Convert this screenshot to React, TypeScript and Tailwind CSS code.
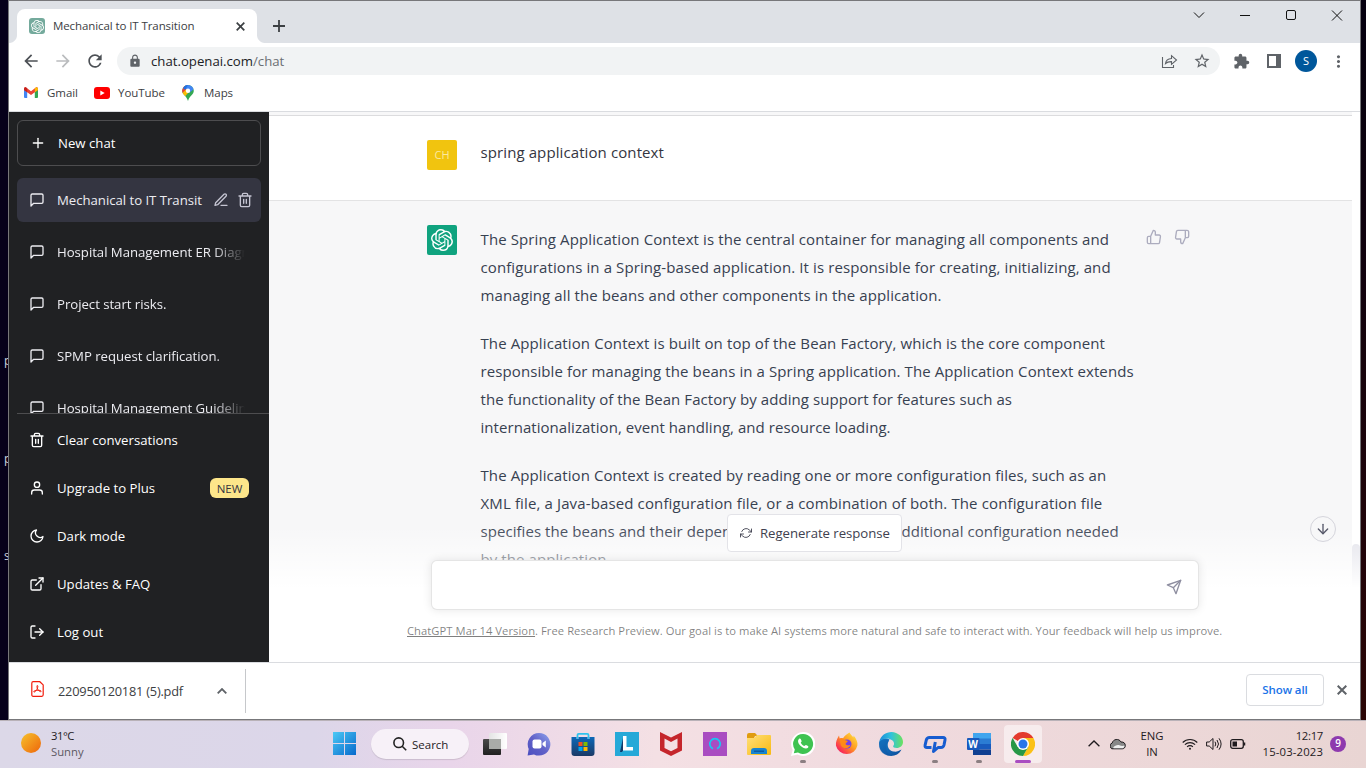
import React from "react";
import {
  FiMessageSquare, FiPlus, FiEdit3, FiTrash2, FiUser, FiMoon, FiExternalLink, FiLogOut,
  FiThumbsUp, FiThumbsDown, FiRefreshCcw, FiSend, FiArrowDown,
} from "react-icons/fi";
import { MdLock, MdStarBorder, MdExtension, MdArrowBack, MdArrowForward, MdRefresh, MdMoreVert, MdClose } from "react-icons/md";
import { SiOpenai } from "react-icons/si";

const answer: { text: string; cls: string }[][] = [
  [
    { text: "The Spring Application Context is the central container for managing all components and", cls: "tracking-[0.114px]" },
    { text: "configurations in a Spring-based application. It is responsible for creating, initializing, and", cls: "tracking-[0.1px]" },
    { text: "managing all the beans and other components in the application.", cls: "tracking-[0.1px]" },
  ],
  [
    { text: "The Application Context is built on top of the Bean Factory, which is the core component", cls: "tracking-[0.105px]" },
    { text: "responsible for managing the beans in a Spring application. The Application Context extends", cls: "tracking-[0.1px]" },
    { text: "the functionality of the Bean Factory by adding support for features such as", cls: "tracking-[0.065px]" },
    { text: "internationalization, event handling, and resource loading.", cls: "tracking-[0.05px]" },
  ],
  [
    { text: "The Application Context is created by reading one or more configuration files, such as an", cls: "tracking-[0.09px]" },
    { text: "XML file, a Java-based configuration file, or a combination of both. The configuration file", cls: "tracking-[0.13px]" },
    { text: "specifies the beans and their dependencies, as well as any additional configuration needed", cls: "tracking-[0.057px]" },
    { text: "by the application.", cls: "tracking-[0.08px]" },
  ],
];

const chats = ["Hospital Management ER Diagram", "Project start risks.", "SPMP request clarification.", "Hospital Management Guidelines"];

function DesktopEdge() {
  return (
    <div className="flex w-2 shrink-0 flex-col overflow-hidden bg-[#06001a] pl-1 text-[12px] leading-4 text-gray-300">
      <span className="mt-[353px]">p</span>
      <span className="mt-[82px]">p</span>
      <span className="mt-[81px]">s</span>
    </div>
  );
}

function TabStrip() {
  return (
    <div className="flex h-[42px] shrink-0 items-end bg-[#dee1e6]">
      <span className="size-2 bg-[radial-gradient(circle_at_0_0,#dee1e6_7.5px,#fff_8.5px)]" />
      <div className="flex h-[34px] w-60 items-center rounded-t-lg bg-white pl-3 pr-2.5">
        <span className="flex size-4 items-center justify-center rounded-[3px] bg-[#74aa9c] text-white">
          <SiOpenai size={13} />
        </span>
        <span className="ml-2 flex-1 whitespace-nowrap text-[11.5px] tracking-[-0.09px] text-[#3c4043]">Mechanical to IT Transition</span>
        <svg width="9" height="9" viewBox="0 0 9 9" stroke="#3c4043" strokeWidth="1.700" className="mr-0.5">
          <path d="M.7.700l7.600 7.600M8.300.700L.7 8.300" />
        </svg>
      </div>
      <span className="size-2 bg-[radial-gradient(circle_at_100%_0,#dee1e6_7.5px,#fff_8.5px)]" />
      <svg className="mb-[11px] ml-2" width="12" height="12" viewBox="0 0 12 12" stroke="#3c4043" strokeWidth="1.8">
        <path d="M6 0v12M0 6h12" />
      </svg>
      <div className="flex-1" />
      <div className="flex h-[42px] items-start pr-[17px] pt-[7px]">
        <svg width="150" height="13" viewBox="0 0 150 13" fill="none" stroke="#111" strokeWidth="1">
          <path d="M1 4.500l5 5 5-5M47 7.500h10" />
          <rect x="93.500" y="2.500" width="9" height="9" rx="1.500" />
          <path d="M139 2.500l10 10M149 2.500l-10 10" />
        </svg>
      </div>
    </div>
  );
}

function Toolbar() {
  return (
    <div className="flex h-9 shrink-0 items-center text-[#5f6368]">
      <MdArrowBack size={20} className="ml-3 text-[#4d5156]" />
      <MdArrowForward size={20} className="ml-3 text-[#babcbe]" />
      <MdRefresh size={20} className="ml-3 text-[#4d5156]" />
      <div className="ml-3 flex h-7 w-[1103px] items-center rounded-full bg-[#f1f3f4] pl-[11px] pr-[9px]">
        <MdLock size={14} />
        <span className="ml-[9px] mt-px flex-1 whitespace-nowrap text-[13.2px] text-[#202124]">
          chat.openai.com<span className="text-[#6b6f73]">/chat</span>
        </span>
        <svg width="17" height="16" viewBox="0 0 17 16" fill="none" stroke="#5f6368" strokeWidth="1.1">
          <path d="M1.500 4v10.500h11v-2.500M4.500 10.500c.4-3.200 2.400-4.800 6-5V2.700L15.500 7l-5 4.300V8.600C7.700 8.500 5.900 9.200 4.500 10.500z" />
        </svg>
        <MdStarBorder size={18} className="ml-[15px]" />
      </div>
      <MdExtension size={17} className="ml-[13px]" />
      <svg className="ml-[17px]" width="14" height="14" viewBox="0 0 14 14">
        <path fill="#5f6368" fillRule="evenodd" d="M0 0h14v14H0zM2 2v10h7V2z" />
      </svg>
      <span className="ml-[14px] flex size-[22px] items-center justify-center rounded-full bg-[#00579b] text-[11px] text-white">S</span>
      <MdMoreVert size={19} className="ml-3" />
    </div>
  );
}

function Bookmarks() {
  return (
    <div className="flex h-[33px] shrink-0 items-center border-b border-[#dadce0] pb-[5px] pl-[15px] text-[11.5px] tracking-[-0.05px] text-[#3c4043]">
      <svg width="14" height="11" viewBox="0 0 14 11">
        <path fill="#4285f4" d="M0 2v8q0 1 1 1h2.200V4.500z" />
        <path fill="#34a853" d="M14 2v8q0 1-1 1h-2.200V4.500z" />
        <path fill="#ea4335" d="M0 2Q0 0 1.500 0L7 4.300 12.500 0Q14 0 14 2v1L7 8 0 3z" />
        <path fill="#fbbc04" d="M10.800 1.300L12.200.2Q14 0 14 2v1l-3.200 2.300z" />
        <path fill="#c5221f" d="M0 2Q0 0 1.700.2L3.200 1.300v4L0 3z" />
      </svg>
      <span className="ml-[9px] w-[38px]">Gmail</span>
      <svg width="16" height="12" viewBox="0 0 16 12" className="ml-[9px]">
        <rect width="16" height="12" rx="3" fill="#f00" />
        <path d="M6.300 3.400v5.200L10.700 6z" fill="#fff" />
      </svg>
      <span className="ml-2 w-[55px]">YouTube</span>
      <svg width="12" height="16" viewBox="0 0 12 16" className="ml-[9px]">
        <clipPath id="pin"><path d="M6 0a5.800 5.800 0 0 1 5.800 5.800C11.800 9.500 7.800 10.500 6 16 4.200 10.500.2 9.500.2 5.800A5.800 5.800 0 0 1 6 0z" /></clipPath>
        <g clipPath="url(#pin)">
          <path fill="#34a853" d="M0 0h12v16H0z" />
          <path fill="#ea4335" d="M0 0h4l2 4-5 5-1-1z" />
          <path fill="#4285f4" d="M3 0h9v4L7 8 3.500 3z" />
          <path fill="#1a73e8" d="M3 0h3L3 5 1 3z" />
          <path fill="#fbbc04" d="M0 8.500L4.500 4l2 3.500L2.500 12z" />
        </g>
        <circle cx="6" cy="5.800" r="2.200" fill="#fff" />
      </svg>
      <span className="ml-[10px]">Maps</span>
    </div>
  );
}

function SideItem({ icon, label, children }: { icon: React.ReactNode; label: string; children?: React.ReactNode }) {
  return (
    <div className="flex h-12 items-center pl-5 pr-5 text-[13.2px] text-white">
      {icon}
      <span className="ml-3 flex-1 pt-0.5">{label}</span>
      {children}
    </div>
  );
}

function TrashIcon({ className }: { className?: string }) {
  return (
    <svg width="16" height="16" viewBox="0 0 24 24" fill="none" stroke="currentColor" strokeWidth="2" strokeLinecap="round" strokeLinejoin="round" className={className}>
      <path d="M3 6h18M19 6v14a2 2 0 0 1-2 2H7a2 2 0 0 1-2-2V6m3 0V4a2 2 0 0 1 2-2h4a2 2 0 0 1 2 2v2M10 11v6M14 11v6" />
    </svg>
  );
}

function Sidebar() {
  return (
    <aside className="flex w-[260px] shrink-0 flex-col bg-[#202123] text-[13.2px] text-[#ececf1]">
      <div className="mx-2 mt-2 flex h-[46px] shrink-0 items-center rounded-md border border-[#4d4d4f] pl-3 text-white">
        <FiPlus size={16} />
        <span className="ml-3 pt-0.5">New chat</span>
      </div>
      <div className="mt-3 flex h-[235px] flex-col gap-2 overflow-hidden px-2">
        <div className="flex h-11 shrink-0 items-center rounded-md bg-[#343541] pl-3 pr-2">
          <FiMessageSquare size={16} />
          <span className="ml-3 flex-1 whitespace-nowrap pt-0.5 tracking-[-0.03px]">Mechanical to IT Transit</span>
          <FiEdit3 size={16} className="text-[#c5c5d2]" />
          <TrashIcon className="ml-2 text-[#c5c5d2]" />
        </div>
        {chats.map((c) => (
          <div key={c} className="flex h-11 shrink-0 items-center pl-3 pr-4">
            <FiMessageSquare size={16} className="shrink-0" />
            <span className="ml-3 flex-1 overflow-hidden whitespace-nowrap mask-r-from-[156px] pt-0.5 tracking-[-0.03px]">{c}</span>
          </div>
        ))}
      </div>
      <div className="ml-2 border-t border-[#4d4d4f]" />
      <div className="-mt-px flex flex-col pt-[3px]">
        <SideItem icon={<TrashIcon />} label="Clear conversations" />
        <SideItem icon={<FiUser size={16} />} label="Upgrade to Plus">
          <span className="flex h-5 w-[39px] items-center justify-center rounded-md bg-[#fde68a] pt-0.5 text-[11.5px] font-medium text-[#343541]">NEW</span>
        </SideItem>
        <SideItem icon={<FiMoon size={16} />} label="Dark mode" />
        <SideItem icon={<FiExternalLink size={16} />} label="Updates & FAQ" />
        <SideItem icon={<FiLogOut size={16} />} label="Log out" />
      </div>
    </aside>
  );
}

function Conversation() {
  return (
    <main className="relative flex h-[550px] flex-1 overflow-hidden bg-white">
      <div className="flex flex-1 flex-col">
        <div className="h-1 shrink-0 border-b border-[#dcdcde] bg-[#f7f7f8]" />
        <div className="flex h-[85px] shrink-0 border-b border-[#e3e3e4] bg-white pl-[158px] pt-6">
          <span className="flex size-[30px] items-center justify-center rounded-xs bg-[#f1c40f] text-[11px] font-medium text-[#fbe9a0]">CH</span>
          <span className="-mt-[2px] ml-[23.500px] whitespace-nowrap text-[15px] leading-7 tracking-[0.1px] text-[#343541]">spring application context</span>
        </div>
        <div className="flex flex-1 bg-[#f7f7f8] pl-[158px] pt-6">
          <span className="flex size-[30px] shrink-0 items-center justify-center rounded-xs bg-[#10a37f] text-white">
            <SiOpenai size={22} />
          </span>
          <div className="ml-[23.500px] flex w-[665px] shrink-0 flex-col gap-5 text-[15px] leading-7 text-[#374151]">
            {answer.map((p, i) => (
              <p key={i}>
                {p.map((l) => (
                  <span key={l.text} className={"block w-fit whitespace-nowrap " + l.cls}>{l.text}</span>
                ))}
              </p>
            ))}
          </div>
          <div className="mt-1 flex h-4 gap-3 text-[#acacbe]">
            <FiThumbsUp size={16} />
            <FiThumbsDown size={16} />
          </div>
        </div>
      </div>
      <div className="flex w-2 shrink-0 flex-col justify-end bg-white">
        <div className="h-[118px] rounded-t-md bg-[#d9d9e3]/80" />
      </div>

      <div className="absolute inset-x-0 bottom-0 flex h-[148px] flex-col bg-linear-to-b from-white/0 from-8% via-white via-50% to-white pl-[162px]">
        <div className="mt-[46px] flex h-[50px] w-[768px] items-center justify-end rounded-md border border-black/10 bg-white pr-4 shadow-[0_0_10px_rgba(0,0,0,0.10)]">
          <FiSend size={16} strokeWidth={2} className="mt-1 text-[#8e8ea0]" />
        </div>
        <p className="-ml-[24px] mt-[13px] whitespace-nowrap text-[11.2px] leading-4 tracking-[0.058px] text-black/50">
          <span className="underline">ChatGPT Mar 14 Version</span>. Free Research Preview. Our goal is to make AI systems more natural and safe to interact with. Your feedback will help us improve.
        </p>
      </div>
      <div className="absolute left-[458px] top-[402px] flex h-[38px] w-[175px] items-center rounded border border-[#e3e3e8] bg-white pl-3 text-[13.2px] text-[#40414f]">
        <FiRefreshCcw size={12} strokeWidth={1.8} className="-scale-x-100" />
        <span className="ml-2 whitespace-nowrap pt-0.5 tracking-[-0.05px]">Regenerate response</span>
      </div>
      <div className="absolute left-[1041px] top-[404px] flex size-[26px] items-center justify-center rounded-full border border-[#d5d5dc] bg-[#f7f7f8] text-[#565869]">
        <FiArrowDown size={16} />
      </div>
    </main>
  );
}

function DownloadBar() {
  return (
    <div className="flex h-[57px] shrink-0 items-center border-t border-[#dadce0] bg-white">
      <svg width="13" height="16" viewBox="0 0 13 16" fill="none" stroke="#f21d0d" strokeWidth="1.200" className="mb-1 ml-[22px]">
        <path d="M.8 2.200Q.8.700 2.200.7h6.600l3.400 3.200v9.900q0 1.500-1.400 1.500H2.200Q.8 15.300.8 13.800z" />
        <path d="M6.300 4.500c1.300 0 0 3.600-1.100 5-.9 1.300-2.300 2-2.500 1.300-.2-.8 2-1.500 4.200-1.500 2 0 3.600.3 3.300 1.100-.5.900-2.600-.5-3.400-2-.8-1.300-1.200-3.900-.5-3.900z" strokeWidth="1" />
      </svg>
      <span className="ml-3.5 w-[125px] whitespace-nowrap pt-0.5 text-[12.800px] tracking-[-0.22px] text-[#3c4043]">220950120181 (5).pdf</span>
      <svg width="10" height="6" viewBox="0 0 10 6" fill="none" stroke="#5f6368" strokeWidth="1.800" className="ml-[34px]">
        <path d="M.7 5.300L5 1l4.300 4.300" />
      </svg>
      <div className="ml-[18px] h-11 w-px bg-[#c6c8cb]" />
      <div className="flex-1" />
      <span className="mb-0.5 flex h-8 w-[78px] items-center justify-center rounded border border-[#dadce0] text-[11.500px] font-semibold tracking-[-0.1px] text-[#1a73e8]">Show all</span>
      <svg width="10" height="10" viewBox="0 0 10 10" stroke="#5f6368" strokeWidth="2" className="mb-0.5 ml-[13px] mr-[13px]">
        <path d="M.7.700l8.600 8.600M9.300.700L.7 9.300" />
      </svg>
    </div>
  );
}

function AppCell({ children, mark }: { children: React.ReactNode; mark?: boolean }) {
  return (
    <div className="flex h-full w-11 flex-col items-center pt-[11px]">
      {children}
      {mark && <span className="mt-1 h-[3px] w-1.5 rounded-full bg-[#8b7f82]" />}
    </div>
  );
}

function Taskbar() {
  return (
    <footer className="flex h-12 shrink-0 items-center border-t border-[#b9b2b8] bg-[linear-gradient(90deg,#dcd8e8_0%,#dcd6e9_23%,#e9d5ea_33%,#f4e0e4_48%,#f0dade_66%,#e9d5d3_100%)] pb-0.5 text-[#1f1b1e]">
      <svg width="20" height="20" viewBox="0 0 20 20" className="mb-0.5 ml-[21px]">
        <defs><linearGradient id="sun" x1="0" y1="0" x2="1" y2="1"><stop offset="0" stopColor="#f6c22d" /><stop offset="1" stopColor="#ee650a" /></linearGradient></defs>
        <circle cx="10" cy="10" r="10" fill="url(#sun)" />
      </svg>
      <div className="ml-2.5 flex w-[271px] flex-col text-[11.3px] leading-4">
        <span className="tracking-[-0.5px]">31°C</span>
        <span className="text-[#5d5862]">Sunny</span>
      </div>
      <div className="flex h-full w-11 items-center justify-center">
        <svg width="23" height="23" viewBox="0 0 23 23">
          <defs><linearGradient id="win" x1="0" y1="0" x2="1" y2="1"><stop offset="0" stopColor="#4cc9f5" /><stop offset="1" stopColor="#0669cc" /></linearGradient></defs>
          <path fill="url(#win)" d="M0 0h11v11H0zM12 0h11v11H12zM0 12h11v11H0zM12 12h11v11H12z" />
        </svg>
      </div>
      <div className="ml-[5px] mr-1 flex h-[30px] w-[98px] items-center rounded-full bg-[#f7f1f8] pl-[22px] shadow-[0_1px_1px_rgba(0,0,0,0.12)]">
        <svg width="14" height="14" viewBox="0 0 14 14" fill="none" stroke="#222" strokeWidth="1.600"><circle cx="5.700" cy="5.700" r="4.800" /><path d="M9.200 9.200l4 4" /></svg>
        <span className="ml-[5px] pt-0.5 text-[11.5px]">Search</span>
      </div>
      <AppCell>
        <svg width="24" height="24" viewBox="0 0 24 24">
          <defs>
            <linearGradient id="tv1" x1="0" y1="0" x2="0" y2="1"><stop offset="0" stopColor="#4a4a4a" /><stop offset="1" stopColor="#202020" /></linearGradient>
            <linearGradient id="tv2" x1="0" y1="0" x2="1" y2="0"><stop offset="0" stopColor="#e4e4e4" /><stop offset="1" stopColor="#fff" /></linearGradient>
          </defs>
          <rect x="6" y="1" width="18" height="16" rx="1" fill="url(#tv2)" />
          <rect x="0" y="7" width="18" height="16" rx="1" fill="url(#tv1)" />
          <rect x="6" y="7" width="12" height="10" fill="#a9aba8" />
        </svg>
      </AppCell>
      <AppCell>
        <svg width="24" height="24" viewBox="0 0 24 24">
          <defs><linearGradient id="teams" x1="0" y1="1" x2="1" y2="0"><stop offset="0" stopColor="#4b4fc0" /><stop offset=".5" stopColor="#6262c8" /><stop offset="1" stopColor="#8fa5ef" /></linearGradient></defs>
          <path fill="url(#teams)" d="M12 1a11.300 11.300 0 1 1-5 21.400L.6 23.500 1.700 17A11.300 11.300 0 0 1 12 1z" />
          <rect x="5.500" y="7.500" width="9" height="9" rx="2" fill="#fff" />
          <path d="M15.500 11l3.300-2.500v7L15.500 13z" fill="#fff" />
        </svg>
      </AppCell>
      <AppCell>
        <svg width="24" height="24" viewBox="0 0 24 24">
          <defs><linearGradient id="store" x1="0" y1="0" x2="0" y2="1"><stop offset="0" stopColor="#0c68b8" /><stop offset="1" stopColor="#1c3a66" /></linearGradient></defs>
          <path d="M6.500 7V3q0-1.200 1.200-1.200h8.600q1.200 0 1.200 1.200v4" fill="none" stroke="#2fc3ee" strokeWidth="1.800" />
          <path fill="url(#store)" d="M.5 5h5v2h2V5h9v2h2V5h5v16q0 3-3 3h-17q-3 0-3-3z" />
          <path fill="#f25022" d="M7.500 10h4v4h-4z" /><path fill="#7fba00" d="M12.500 10h4v4h-4z" />
          <path fill="#00a4ef" d="M7.500 15h4v4h-4z" /><path fill="#ffb900" d="M12.500 15h4v4h-4z" />
        </svg>
      </AppCell>
      <AppCell>
        <svg width="24" height="24" viewBox="0 0 24 24">
          <path fill="#25a9d8" d="M0 0h24v24H0z" />
          <path fill="#123c6b" d="M8 6v12.500l-1 1.500H5z" />
          <path fill="#fff" d="M8 4h3.500v11H18v3.500H8z" />
        </svg>
      </AppCell>
      <AppCell>
        <svg width="24" height="24" viewBox="0 0 24 24">
          <path fill="#c5262c" fillRule="evenodd" d="M1 0l11 5.500L23 0v18.500L12 24 1 18.500zM5.500 6.500V16L12 19.200 18.500 16V6.500L12 10z" />
        </svg>
      </AppCell>
      <AppCell>
        <svg width="24" height="24" viewBox="0 0 24 24">
          <path fill="#a94dc1" d="M0 0h24v24H0z" />
          <path d="M10 16.700a5.200 5.200 0 1 1 4 0" fill="none" stroke="#1bc6f2" strokeWidth="1.700" />
        </svg>
      </AppCell>
      <AppCell>
        <svg width="24" height="24" viewBox="0 0 24 24">
          <defs><linearGradient id="folder" x1="0" y1="0" x2="1" y2="1"><stop offset="0" stopColor="#ffe07a" /><stop offset="1" stopColor="#f8b911" /></linearGradient></defs>
          <path fill="#e09c10" d="M0 3q0-2 2-2h6l3 3h-3L6 8H0z" />
          <path fill="url(#folder)" d="M0 6h7l3-3h13q1 0 1 1v18q0 1-1 1H1q-1 0-1-1z" />
          <path fill="#1884d0" d="M4 19q0-3 3-3h10q3 0 3 3v3H4z" />
          <path fill="#0d5ca3" d="M7 18.500h10V20H7z" />
        </svg>
      </AppCell>
      <AppCell mark>
        <svg width="24" height="24" viewBox="0 0 24 24">
          <path fill="#fff" d="M12 0a12 12 0 1 1-5.500 22.500L0 24l1.700-6A12 12 0 0 1 12 0z" />
          <path fill="#3fc351" d="M12 2a10 10 0 1 1-5 18.600L2.800 21.300l1-3.800A10 10 0 0 1 12 2z" />
          <path fill="#fff" d="M8.200 6.800c.5-.5 1.200-.4 1.500.2l.9 2c.2.600-.7 1.200-.8 1.700.7 1.500 1.900 2.600 3.500 3.200.5-.1 1.100-1.200 1.700-1l2 1c.6.400.4 1.300 0 1.800-2.800 3-10.800-3-9.900-7.200.2-.8.6-1.300 1.100-1.700z" />
        </svg>
      </AppCell>
      <AppCell>
        <svg width="24" height="24" viewBox="0 0 24 24">
          <defs><linearGradient id="fox" x1="1" y1="0" x2="0" y2="1"><stop offset="0" stopColor="#fff04a" /><stop offset=".45" stopColor="#ff9a20" /><stop offset=".8" stopColor="#fa3154" /><stop offset="1" stopColor="#d6257e" /></linearGradient></defs>
          <path fill="url(#fox)" d="M14.500.5c.7 2 2.500 3 4 5V3.500c3 3.500 4.500 7 3.900 10A11 11 0 0 1 1 13.800C.5 10 2 7 4 3.500l.7 3c1-.5 2.300-.5 3.300-.3C9.500 3.500 12 2 14.500.5z" />
          <circle cx="12" cy="12" r="4.500" fill="#7542e5" />
          <path fill="#ff8a17" d="M4.600 7.500c3-1.600 4.600-.3 5.800.8l2.500.7c-.4 1.300-2.200 1.700-2.400 3 1 1.600 3 1.600 5 .7-1 4-7.300 4.600-9.400.8-.8-1.600-.8-3.800-1.500-6z" />
        </svg>
      </AppCell>
      <AppCell>
        <svg width="24" height="24" viewBox="0 0 24 24">
          <defs>
            <linearGradient id="edge1" x1="0" y1="0" x2="1" y2="0"><stop offset="0" stopColor="#1b8bd8" /><stop offset=".5" stopColor="#31c2dd" /><stop offset="1" stopColor="#6be25c" /></linearGradient>
            <linearGradient id="edge2" x1="0" y1="0" x2="1" y2="1"><stop offset="0" stopColor="#1787d4" /><stop offset="1" stopColor="#0b4a98" /></linearGradient>
          </defs>
          <path fill="url(#edge2)" d="M.2 10C2 6 7 5.500 10.500 7.500 7 13 9 18.500 14.500 19.500c3 .5 5.500-.5 8-2C19 24.500 11 25.500 5.500 22 1.500 19.500-.5 15 .2 10z" />
          <path fill="url(#edge1)" d="M.2 10C1.500 3.500 7 0 12.500 0 19 .2 24 4.800 24 10c0 3.800-3 6-6.300 6-2.500 0-4-1-3.500-2 1.500-1.500 1-4-.7-5.500C9.500 5.300 3 6 .2 10z" />
          <path fill="#0d4f9e" d="M10 9C6 13 6 20 12 23.900 3 24-1.500 17 .2 10 3 6.500 8 6.500 10 9z" opacity=".35" />
        </svg>
      </AppCell>
      <AppCell mark>
        <svg width="24" height="24" viewBox="0 0 24 24" fill="none" stroke="#165cd0" strokeWidth="3" strokeLinejoin="round">
          <path d="M8.500 15.500H4q-2.300 0-1.900-2.300L3.300 8Q4 5.500 6.500 5.500H20q2.500 0 2 2.500l-1 5q-.6 2.500-3 2.500h-3L10.500 19.500l1.800-9.500" />
        </svg>
      </AppCell>
      <AppCell mark>
        <svg width="24" height="24" viewBox="0 0 24 24">
          <path fill="#41a5ee" d="M6 1h18v6H6z" /><path fill="#2b7cd3" d="M6 6.500h18V12H6z" />
          <path fill="#185abd" d="M6 12h18v5.500H6z" /><path fill="#103f91" d="M6 17.500h18V23H6z" />
          <rect y="6" width="12.500" height="12" rx="1" fill="#185abd" />
          <text x="1.300" y="15.500" fill="#fff" fontSize="10" fontWeight="700" fontFamily="Open Sans, sans-serif">W</text>
        </svg>
      </AppCell>
      <div className="flex h-full w-11 items-start justify-center pt-1">
        <div className="flex h-[38px] w-[38px] flex-col items-center rounded bg-white/50 pt-[7px]">
          <svg width="24" height="24" viewBox="0 0 24 24" className="shrink-0">
            <path fill="#e33b2e" d="M12 12L1.600 6a12 12 0 0 1 20.800 0z" />
            <path fill="#fbc116" d="M12 12V6h10.400A12 12 0 0 1 12 24l5.200-9z" />
            <path fill="#279847" d="M12 12l5.200 3L12 24A12 12 0 0 1 1.600 6l5.200 9z" />
            <circle cx="12" cy="12" r="6" fill="#fff" /><circle cx="12" cy="12" r="4.500" fill="#2a76e8" />
          </svg>
          <span className="mt-1 h-[3px] w-4 shrink-0 rounded-full bg-[#a94dc1]" />
        </div>
      </div>
      <svg className="ml-[43px]" width="12" height="7" viewBox="0 0 12 7" fill="none" stroke="#1f1b1e" strokeWidth="1.300"><path d="M.6 6.300L6 1l5.400 5.300" /></svg>
      <svg className="ml-[10px]" width="16" height="12" viewBox="0 0 16 12" fill="#888" stroke="#1f1b1e">
        <path d="M4 10.800A3 3 0 0 1 2.200 5C3 1 9 0 11 4c3-.3 4.300 1.600 4.300 3.500 0 2-1.300 3.300-3 3.300z" />
        <path d="M3 10c2-3 5-3.500 7-2.500s4 0 4.500.5c0 1.200-1 2.200-2.200 2.200H4z" fill="#eee" stroke="none" />
      </svg>
      <div className="ml-3 flex w-[28px] flex-col items-center text-[11.300px] leading-4"><span>ENG</span><span>IN</span></div>
      <svg className="ml-4" width="16" height="12" viewBox="0 0 16 12" fill="none" stroke="#1f1b1e" strokeWidth="1.100">
        <path d="M.7 4.500a10.300 10.300 0 0 1 14.600 0M2.900 6.700a7.200 7.200 0 0 1 10.200 0M5.100 8.800a4.100 4.100 0 0 1 5.800 0" /><circle cx="8" cy="10.700" r="1" fill="#1f1b1e" stroke="none" />
      </svg>
      <svg className="ml-2" width="16" height="14" viewBox="0 0 16 14" fill="none" stroke="#1f1b1e" strokeWidth="1">
        <path d="M.6 5h2.600L7 1.500v11L3.200 9H.6zM9 4.700q1.600 2.300 0 4.600M11 3q3 4 0 8M13 1.300q4.200 5.700 0 11.400" />
      </svg>
      <svg className="ml-2" width="16" height="10" viewBox="0 0 16 10"><rect x=".7" y=".7" width="12.600" height="8.600" rx="2" fill="none" stroke="#1f1b1e" strokeWidth="1.300" /><rect x="2.500" y="2.500" width="4.500" height="5" fill="#1f1b1e" /><path d="M14.500 3.500v3" stroke="#1f1b1e" strokeWidth="1.500" /></svg>
      <div className="ml-3 flex w-[65px] flex-col items-end whitespace-nowrap text-[11.300px] leading-4"><span className="tracking-[-0.3px]">12:17</span><span className="tracking-[0.15px]">15-03-2023</span></div>
      <span className="ml-[7px] flex size-4 items-center justify-center rounded-full bg-[#8e3aae] text-[10px] font-semibold text-white">9</span>
    </footer>
  );
}

export default function App() {
  return (
    <div className="flex h-[768px] w-[1366px] flex-col overflow-hidden bg-[#06001a] font-['Open_Sans',sans-serif]">
      <div className="flex h-[720px] shrink-0">
        <DesktopEdge />
        <div className="flex w-[1353px] shrink-0 flex-col border border-[#77777a] bg-white">
          <TabStrip />
          <Toolbar />
          <Bookmarks />
          <div className="flex h-[550px] shrink-0">
            <Sidebar />
            <Conversation />
          </div>
          <DownloadBar />
        </div>
        <div className="flex-1 bg-linear-to-b from-[#05000f] to-[#2b0505]" />
      </div>
      <Taskbar />
    </div>
  );
}
